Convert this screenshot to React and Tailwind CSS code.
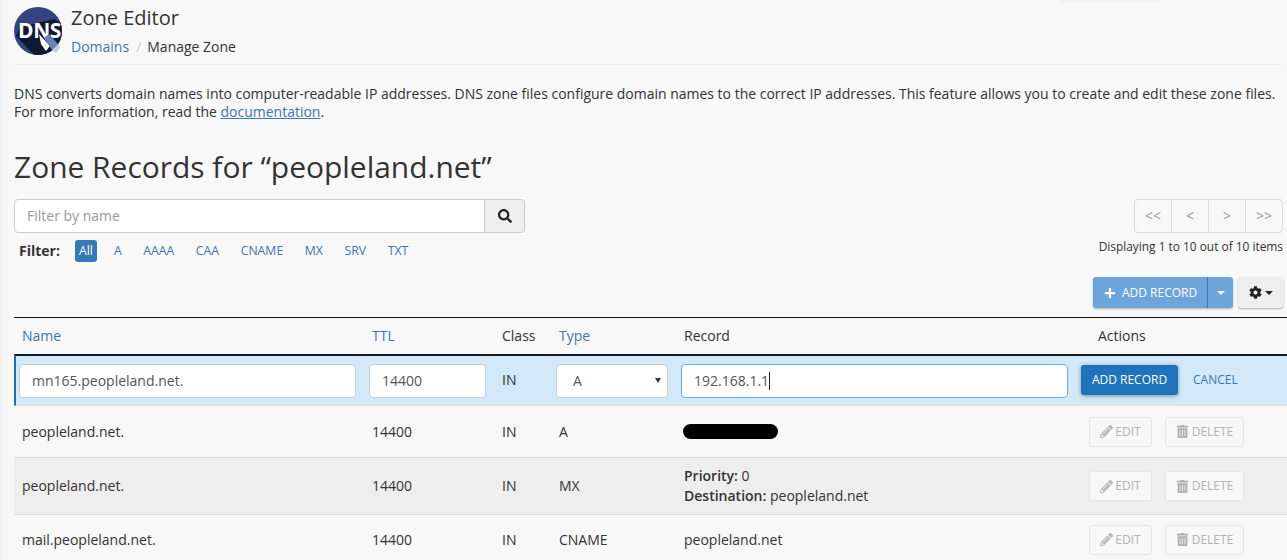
import { FaPlus, FaCog, FaSearch, FaPencilAlt, FaTrashAlt } from "react-icons/fa";

const rowGrid = "grid grid-cols-[350px_130px_57px_125px_414px_193px] items-center";

const DnsLogo = () => (
  <svg width="48" height="48" viewBox="0 0 48 48" className="shrink-0">
    <defs>
      <clipPath id="dns-circle">
        <circle cx="24" cy="24" r="24" />
      </clipPath>
    </defs>
    <circle cx="24" cy="24" r="24" fill="#34427f" />
    <path d="M2 29 L22 50 L50 50 L50 18 L40 12 L6 20 Z" fill="#0e1a33" clipPath="url(#dns-circle)" />
    <text x="4" y="31" fontFamily="'Open Sans', sans-serif" fontWeight="700" fontSize="21" fill="#fff" letterSpacing="-0.4">DNS</text>
    <path d="M25 27 L36 39 L32 44 L27 37 Z" fill="#fff" />
    <path d="M30 31 L35 27 L44 37 L38 43 Z" fill="#6b7fb8" />
    <path d="M38 43 L44 37 L46 41 L42 46 Z" fill="#c3cce2" />
  </svg>
);

const PagerButton = ({ children, last }) => (
  <button className={`h-full text-[#999] text-sm ${last ? "w-[36px]" : "w-[37px] border-r border-[#ddd]"}`}>{children}</button>
);

const RowActions = () => (
  <div className="flex gap-[13px] -ml-px text-xs text-[#b3b3b3]">
    <button className="flex items-center justify-center gap-[2px] w-[63px] h-[30px] bg-[#f8f8f8] border border-[#e6e6e6] rounded-[3px]">
      <FaPencilAlt className="text-[13px] text-[#b8b8b8]" />
      EDIT
    </button>
    <button className="flex items-center justify-center gap-[3px] w-[79px] h-[30px] bg-[#f8f8f8] border border-[#e6e6e6] rounded-[3px]">
      <FaTrashAlt className="text-[13px] text-[#b0b0b0]" />
      DELETE
    </button>
  </div>
);

const Row = ({ name, type, record, className }) => (
  <div className={`${rowGrid} border-b border-[#ddd] ${className}`}>
    <div className="px-2">{name}</div>
    <div className="px-2">14400</div>
    <div className="px-2">IN</div>
    <div className="px-2">{type}</div>
    <div className="px-2">{record}</div>
    <div>
      <RowActions />
    </div>
  </div>
);

export default function App() {
  const filters = ["A", "AAAA", "CAA", "CNAME", "MX", "SRV", "TXT"];

  return (
    <div className="relative h-[560px] overflow-hidden bg-[#f8f8f8] border-l-[3px] border-[#f2f2f2] pl-[11px] pr-1 text-sm text-[#333] font-['Open_Sans',sans-serif]">
      <div className="absolute top-0 left-[1057px] w-[98px] h-[2px] bg-[#f1f1f1]" />

      <div className="flex items-start gap-[9px] h-[65px] pt-[7px] border-b border-[#eee]">
        <DnsLogo />
        <div>
          <h1 className="text-xl leading-[22px] mt-0 text-[#333]">Zone Editor</h1>
          <div className="mt-[8px] leading-5">
            <a className="text-[#3d76ad]">Domains</a>
            <span className="text-[#ccc] pl-[7px] pr-[6px]">/</span>
            <span>Manage Zone</span>
          </div>
        </div>
      </div>

      <p className="mt-[20px] text-[13.99px] leading-[18px] whitespace-nowrap">
        DNS converts domain names into computer-readable IP addresses. DNS zone files configure domain names to the correct IP addresses. This feature allows you to create and edit these zone files.
        <br />
        For more information, read the <a className="text-[#3d76ad] underline">documentation</a>.
      </p>

      <h2 className="mt-[26px] text-[29.95px] leading-[40px] text-[#333]">Zone Records for “peopleland.net”</h2>

      <div className="flex justify-between items-start mt-[12px]">
        <div>
          <div className="flex w-[511px] h-[34px]">
            <div className="flex-1 flex items-center pl-3 bg-white border border-[#ccc] rounded-l-[4px] text-[#999]">Filter by name</div>
            <div className="w-[40px] flex items-center justify-center bg-[#eee] border border-l-0 border-[#ccc] rounded-r-[4px] text-[#222]">
              <FaSearch className="text-[14px]" />
            </div>
          </div>
          <div className="flex items-center mt-[7px] h-[22px] text-[12.25px]">
            <b className="ml-[5px] text-sm font-bold text-[#333]">Filter:</b>
            <span className="ml-[15px] w-[22px] h-[22px] flex items-center justify-center rounded-[3px] bg-[#337ab7] text-white">All</span>
            {filters.map((f) => (
              <a key={f} className="ml-[17px] mr-[4.6px] text-[#3d76ad]">{f}</a>
            ))}
          </div>
        </div>
        <div className="flex flex-col items-end">
          <div className="flex h-[34px] bg-[#f8f8f8] border border-[#ddd] rounded-[4px]">
            <PagerButton>&lt;&lt;</PagerButton>
            <PagerButton>&lt;</PagerButton>
            <PagerButton>&gt;</PagerButton>
            <PagerButton last>&gt;&gt;</PagerButton>
          </div>
          <div className="mt-[3px] text-[11.9px] leading-5 text-[#333]">Displaying 1 to 10 out of 10 items</div>
        </div>
      </div>

      <div className="flex justify-end gap-[5px] mt-[15px] h-[31px]">
        <div className="flex text-white text-xs rounded-[3px] bg-[#6ba5d9] shadow-[0_1px_2px_rgba(0,0,0,0.3)]">
          <div className="flex items-center gap-[6px] w-[115px] pl-[11px] border-r border-[#3f78ab]">
            <FaPlus className="text-[12px]" />
            ADD RECORD
          </div>
          <div className="w-[25px] flex items-center justify-center">
            <span className="border-x-4 border-x-transparent border-t-4 border-t-white" />
          </div>
        </div>
        <div className="flex items-center justify-center gap-[3px] w-[45px] bg-[#eee] rounded-[3px] text-[#222] shadow-[0_1px_2px_rgba(0,0,0,0.3)]">
          <FaCog className="text-[13px]" />
          <span className="border-x-4 border-x-transparent border-t-4 border-t-[#222]" />
        </div>
      </div>

      <div className="mt-[9px] -mr-1">
        <div className={`${rowGrid} h-[37px] border-t border-[#111]`}>
          <a className="px-2 text-[#3d76ad]">Name</a>
          <a className="px-2 text-[#3d76ad]">TTL</a>
          <div className="px-2">Class</div>
          <a className="px-2 text-[#3d76ad]">Type</a>
          <div className="px-2">Record</div>
          <div className="px-2">Actions</div>
        </div>

        <div className={`${rowGrid} h-[52px] bg-[#d1e9f9] border-t-2 border-t-[#111a22] border-l-2 border-l-[#1f6fb5] border-b border-b-[#ddd]`}>
          <div className="pl-[3px] pr-[10px]">
            <div className="flex items-center h-[34px] pl-[12px] bg-white border border-[#ccc] rounded-[4px] text-[#555]">mn165.peopleland.net.</div>
          </div>
          <div className="pl-[3px] pr-[8px]">
            <div className="flex items-center h-[34px] w-[117px] pl-[12px] bg-white border border-[#ccc] rounded-[4px] text-[#555]">14400</div>
          </div>
          <div className="pl-[6px] -mt-px">IN</div>
          <div className="pl-[3px]">
            <div className="flex items-center justify-between h-[34px] w-[112px] pl-[16px] pr-[6px] bg-white border border-[#ccc] rounded-[4px] text-[#555]">
              A
              <span className="border-x-[3px] border-x-transparent border-t-[5px] border-t-[#333]" />
            </div>
          </div>
          <div className="pl-[3px]">
            <div className="flex items-center h-[34px] w-[387px] pl-[12px] bg-white border border-[#66afe9] rounded-[4px] text-[#555]">
              192.168.1.1
              <span className="w-px h-[18px] bg-[#222]" />
            </div>
          </div>
          <div className="flex items-center -ml-[11px] -mt-[2px]">
            <button className="w-[97px] h-[30px] bg-[#1f72bc] text-white text-xs rounded-[3px] shadow-[0_1px_4px_rgba(0,0,0,0.4)]">ADD RECORD</button>
            <a className="ml-[15px] text-xs text-[#3d76ad]">CANCEL</a>
          </div>
        </div>

        <Row
          className="h-[52px] bg-[#f8f8f8]"
          name="peopleland.net."
          type="A"
          record={<div className="w-[95px] h-[15px] rounded-full bg-black -ml-[1px]" />}
        />
        <Row
          className="h-[57px] bg-[#eeeeee]"
          name="peopleland.net."
          type="MX"
          record={
            <div className="leading-5">
              <div><b className="font-semibold">Priority:</b> 0</div>
              <div><b className="font-semibold">Destination:</b> peopleland.net</div>
            </div>
          }
        />
        <Row className="h-[50px] bg-[#f8f8f8]" name="mail.peopleland.net." type="CNAME" record="peopleland.net" />
      </div>
    </div>
  );
}
